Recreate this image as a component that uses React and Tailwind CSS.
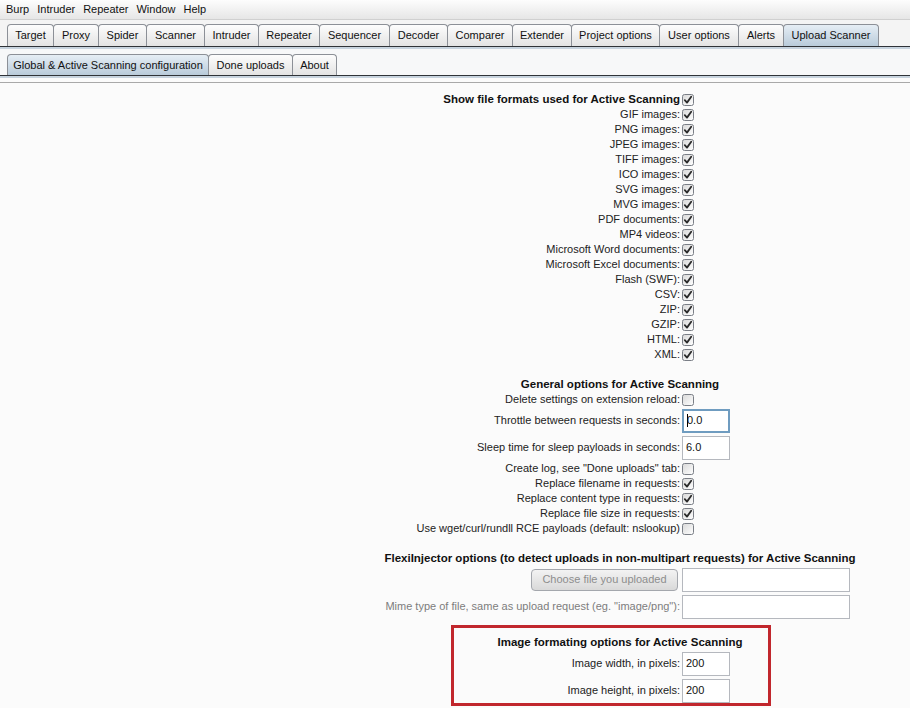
import React from 'react';

const font = { fontFamily: '"Liberation Sans", Arial, sans-serif' };

const topTabs = [
  ['Target', 47], ['Proxy', 46], ['Spider', 49], ['Scanner', 59], ['Intruder', 55],
  ['Repeater', 62], ['Sequencer', 71], ['Decoder', 59], ['Comparer', 66], ['Extender', 60],
  ['Project options', 89], ['User options', 80], ['Alerts', 46], ['Upload Scanner', 96],
];

const subTabs = [['Global & Active Scanning configuration', 202], ['Done uploads', 85], ['About', 45]];

function Tab({ label, width, selected }) {
  return (
    <div
      style={{ width }}
      className={`-ml-px first:ml-0 h-full flex items-center justify-center border border-b-0 border-[#8c9097] rounded-t-[4px] text-[11px] text-[#111] ${
        selected ? 'bg-gradient-to-b from-[#e6eef5] to-[#b9cbda]' : 'bg-gradient-to-b from-[#fdfdfd] to-[#e3e3e3]'
      }`}
    >
      {label}
    </div>
  );
}

function Check({ on }) {
  return (
    <svg width="12" height="12" viewBox="0 0 12 12" className="block">
      <defs>
        <linearGradient id="cbg" x1="0" y1="0" x2="1" y2="1">
          <stop offset="0" stopColor="#d8d8d8" />
          <stop offset="1" stopColor="#ffffff" />
        </linearGradient>
      </defs>
      <rect x="0.5" y="0.5" width="11" height="11" rx="2" fill="url(#cbg)" stroke="#7a7e86" />
      {on && <path d="M2.8 6.2 L5 8.6 L9.2 2.8" fill="none" stroke="#2a2a2a" strokeWidth="1.8" strokeLinecap="round" strokeLinejoin="round" />}
    </svg>
  );
}

function CheckRow({ label, on, bold }) {
  return (
    <>
      <div className={`h-[15px] flex items-center justify-end ${bold ? 'text-[11.5px] font-bold text-[#111]' : 'text-[11px] text-[#222]'}`}>
        {label}
      </div>
      <div className="h-[15px] flex items-center">
        <Check on={on} />
      </div>
    </>
  );
}

function InputRow({ label, value, focused }) {
  return (
    <>
      <div className="h-[27px] flex items-center justify-end text-[11px] text-[#222]">{label}</div>
      <div className="h-[27px] flex items-center">
        <div
          className={`h-[24px] w-[48px] bg-white flex items-center pl-[3px] text-[11px] text-[#111] ${
            focused ? 'border-2 border-[#6f9cc0]' : 'border border-[#b5b8be]'
          }`}
        >
          {focused && <span className="w-px h-[13px] bg-black -mr-px" />}
          {value}
        </div>
      </div>
    </>
  );
}

function Header({ children }) {
  return <div className="col-span-2 h-[15px] flex items-center justify-center text-[11.5px] font-bold text-[#111]">{children}</div>;
}

const Gap = () => <div className="col-span-2 h-[15px]" />;

export default function App() {
  return (
    <div style={font} className="relative w-[910px] h-[708px] bg-[#fbfbfb] overflow-hidden">
      {/* menu */}
      <div className="h-[20px] flex items-center gap-[8px] pl-[6px] text-[11px] text-[#111] bg-gradient-to-b from-[#fdfdfd] to-[#e6e6e6] border-b border-[#d0d0d0]">
        <span>Burp</span><span>Intruder</span><span>Repeater</span><span>Window</span><span>Help</span>
      </div>
      <div className="h-[4px] bg-[#f4f4f4]" />
      <div className="h-[22px] flex pl-[7px] bg-[#f4f4f4]">
        {topTabs.map(([l, w]) => (
          <Tab key={l} label={l} width={w} selected={l === 'Upload Scanner'} />
        ))}
      </div>
      <div className="h-px bg-[#2f3338]" />
      <div className="h-[2px] bg-[#c7d3de]" />
      <div className="h-[5px] bg-[#f7f8f9]" />
      <div className="h-[21px] flex pl-[7px] bg-[#f7f8f9]">
        {subTabs.map(([l, w]) => (
          <Tab key={l} label={l} width={w} selected={l.startsWith('Global')} />
        ))}
      </div>
      <div className="h-px bg-[#2f3338]" />
      <div className="h-[2px] bg-[#c7d3de]" />
      <div className="h-[4px]" />
      <div className="h-px bg-[#a9a9a9]" />

      {/* content */}
      <div className="pt-[9px] pl-[384px]">
        <div className="grid grid-cols-[296px_174px] gap-x-[2px]">
          <CheckRow label="Show file formats used for Active Scanning" on bold />
          {['GIF images:', 'PNG images:', 'JPEG images:', 'TIFF images:', 'ICO images:', 'SVG images:', 'MVG images:',
            'PDF documents:', 'MP4 videos:', 'Microsoft Word documents:', 'Microsoft Excel documents:', 'Flash (SWF):',
            'CSV:', 'ZIP:', 'GZIP:', 'HTML:', 'XML:'].map((l) => (
            <CheckRow key={l} label={l} on />
          ))}
          <Gap />
          <Header>General options for Active Scanning</Header>
          <CheckRow label="Delete settings on extension reload:" />
          <InputRow label="Throttle between requests in seconds:" value="0.0" focused />
          <InputRow label="Sleep time for sleep payloads in seconds:" value="6.0" />
          <CheckRow label={'Create log, see "Done uploads" tab:'} />
          <CheckRow label="Replace filename in requests:" on />
          <CheckRow label="Replace content type in requests:" on />
          <CheckRow label="Replace file size in requests:" on />
          <CheckRow label="Use wget/curl/rundll RCE payloads (default: nslookup)" />
          <Gap />
          <Header>FlexiInjector options (to detect uploads in non-multipart requests) for Active Scanning</Header>
          <div className="h-[27px] flex items-center justify-end">
            <div className="h-[22px] w-[147px] mr-[2px] flex items-center justify-center rounded-[4px] border border-[#a4a7ad] bg-gradient-to-b from-[#f3f3f3] to-[#d9d9d9] text-[11px] text-[#8d8d8d]">
              Choose file you uploaded
            </div>
          </div>
          <div className="h-[27px] flex items-center">
            <div className="h-[24px] w-[168px] bg-white border border-[#b5b8be]" />
          </div>
          <div className="h-[27px] flex items-center justify-end text-[11px] text-[#7d7d7d]">
            Mime type of file, same as upload request (eg. "image/png"):
          </div>
          <div className="h-[27px] flex items-center">
            <div className="h-[24px] w-[168px] bg-white border border-[#b5b8be]" />
          </div>
          <Gap />
          <Header>Image formating options for Active Scanning</Header>
          <InputRow label="Image width, in pixels:" value="200" />
          <InputRow label="Image height, in pixels:" value="200" />
        </div>
      </div>

      {/* red annotation box */}
      <div className="absolute left-[451px] top-[625px] w-[320px] h-[81px] border-[3px] border-[#c1272d]" />
    </div>
  );
}
